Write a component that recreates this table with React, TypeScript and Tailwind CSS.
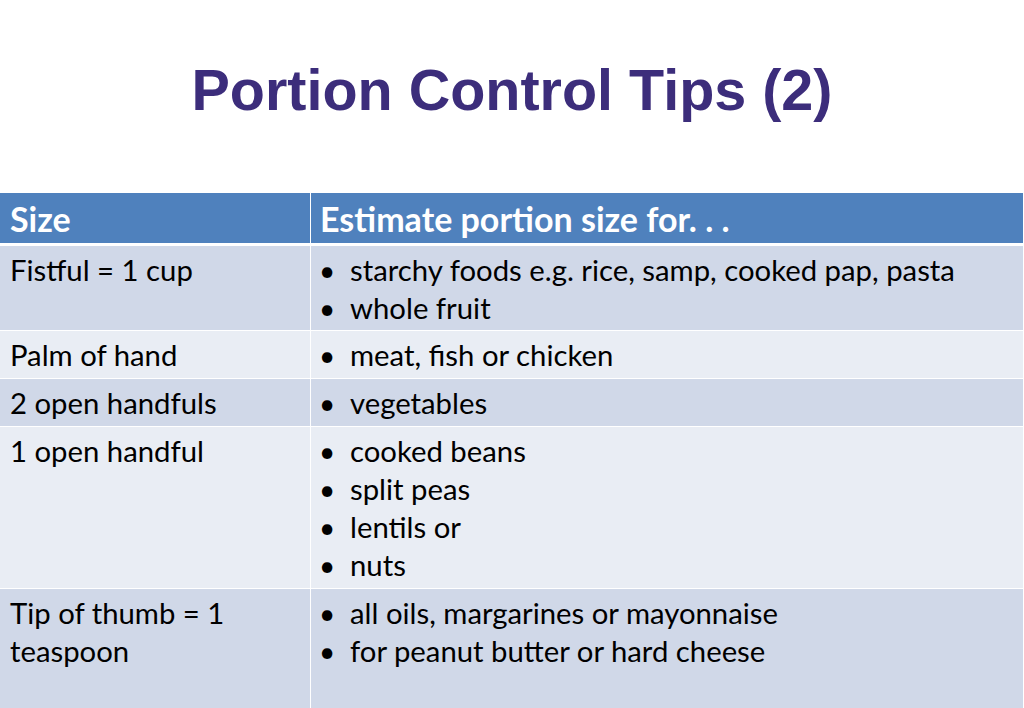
import React from "react";

type Row = { size: string[]; items: string[]; h: string; bg: string };

const rows: Row[] = [
  { size: ["Fistful = 1 cup"], items: ["starchy foods e.g. rice, samp, cooked pap, pasta", "whole fruit"], h: "h-[85px]", bg: "bg-[#d0d8e8]" },
  { size: ["Palm of hand"], items: ["meat, fish or chicken"], h: "h-[48px]", bg: "bg-[#e9edf4]" },
  { size: ["2 open handfuls"], items: ["vegetables"], h: "h-[48px]", bg: "bg-[#d0d8e8]" },
  { size: ["1 open handful"], items: ["cooked beans", "split peas", "lentils or", "nuts"], h: "h-[162px]", bg: "bg-[#e9edf4]" },
  { size: ["Tip of thumb = 1", "teaspoon"], items: ["all oils, margarines or mayonnaise", "for peanut butter or hard cheese"], h: "h-[120px]", bg: "bg-[#d0d8e8]" },
];

const App = () => {
  return (
    <div className="w-[1024px] h-[708px] overflow-hidden bg-white">
      <div className="h-[193px] pt-[52px] text-center">
        <h1 className="text-[57.5px] leading-[76px] font-bold text-[#3c2d7b] [font-family:'Liberation_Sans',sans-serif]">
          Portion Control Tips (2)
        </h1>
      </div>
      <div className="w-[1023px] flex flex-col text-[29.3px] leading-[38px] [font-family:Lato,sans-serif]">
        <div className="grid grid-cols-[310px_1fr] gap-x-px h-[52px] bg-white border-b-2 border-white">
          <div className="bg-[#4f81bd] text-white font-bold text-[34px] pl-[10px] pt-[7px]">Size</div>
          <div className="bg-[#4f81bd] text-white font-bold text-[34px] pl-[9px] pt-[7px]">Estimate portion size for. . .</div>
        </div>
        {rows.map((row, i) => (
          <div key={i} className={`grid grid-cols-[310px_1fr] gap-x-px bg-white border-t border-white ${row.h}`}>
            <div className={`${row.bg} pl-[10px] pt-[5px] text-black`}>
              {row.size.map((s, j) => (
                <div key={j}>{s}</div>
              ))}
            </div>
            <div className={`${row.bg} pl-[8px] pt-[5px] text-black`}>
              {row.items.map((it, j) => (
                <div key={j} className="flex">
                  <span className="w-[31px] text-[28px]">•</span>
                  <span>{it}</span>
                </div>
              ))}
            </div>
          </div>
        ))}
      </div>
    </div>
  );
};

export default App;
